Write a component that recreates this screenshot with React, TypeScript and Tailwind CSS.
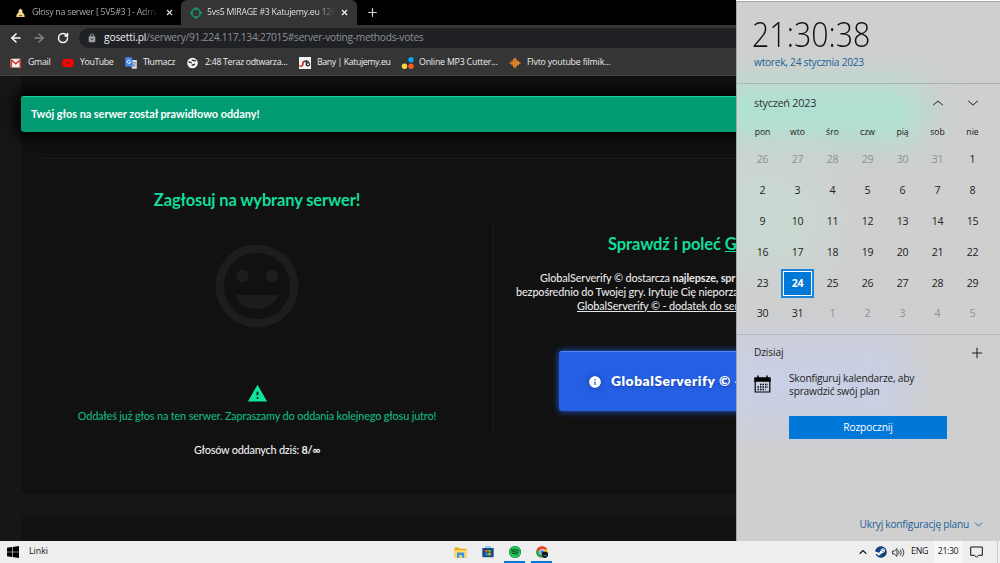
import type { ReactNode } from 'react'
import { ArrowLeft, ArrowRight, ChevronDown, ChevronUp, Plus, RotateCw, X } from 'lucide-react'
import { FaSpotify, FaSteam, FaYoutube } from 'react-icons/fa'
import { MdInfo, MdLock, MdWarning } from 'react-icons/md'

const weekDays = ['pon', 'wto', 'śro', 'czw', 'pią', 'sob', 'nie']

const days = [
  26, 27, 28, 29, 30, 31, 1, 2, 3, 4, 5, 6, 7, 8, 9, 10, 11, 12, 13, 14, 15, 16, 17, 18, 19, 20, 21,
  22, 23, 24, 25, 26, 27, 28, 29, 30, 31, 1, 2, 3, 4, 5,
]

function GmailIcon() {
  return (
    <svg viewBox="0 0 12 12" className="size-3">
      <rect x="0.500" y="1.800" width="10.500" height="8.700" rx="0.800" fill="#f2f2f2" />
      <path d="M1.300 10.500V3L5.750 6.800 10.200 3v7.500" fill="none" stroke="#d93a2f" strokeWidth="1.600" />
    </svg>
  )
}

function TranslateIcon() {
  return (
    <svg viewBox="0 0 12 12" className="size-3">
      <path d="M4.500 3h7.300v8.800H7z" fill="#d4d7dc" />
      <path d="M0.300 0.300h6.400L8.800 9.500H0.300z" fill="#4a86ee" />
      <path d="M5.300 3.700a1.700 1.700 0 1 0 .3 1.400H4" fill="none" stroke="#fff" strokeWidth="0.800" />
      <path d="M8 5.800h3M9.500 5v.8M8.700 9.500l2-3.500M8.800 7.300l1.800 2" stroke="#777" strokeWidth="0.600" />
    </svg>
  )
}

function GlobeIcon() {
  return (
    <svg viewBox="0 0 12 12" className="size-3">
      <circle cx="5.500" cy="6" r="5.300" fill="#f1f1f1" />
      <path d="M1.500 5c1.500 0 2 .8 3.300.8M4.800 3.200c1.200.6 2.700-.2 4.200.8M5 8.800c.5-1.300 2-.8 2.700-2" fill="none" stroke="#333" strokeWidth="1.500" />
    </svg>
  )
}

function BanIcon() {
  return (
    <svg viewBox="0 0 12 12" className="size-3">
      <rect width="12" height="12" fill="#f4f4f4" />
      <path d="M0.500 9h2.300c1.800 0 .2-4.600 2.800-4.600" fill="none" stroke="#d02626" strokeWidth="1.700" />
      <path d="M5 4.300h5M7.300 3v5.500" stroke="#222" strokeWidth="1.100" />
      <circle cx="9" cy="7.300" r="1.600" fill="none" stroke="#222" strokeWidth="1.200" />
    </svg>
  )
}

function CutterIcon() {
  return (
    <svg viewBox="0 0 12 12" className="size-3 overflow-visible">
      <circle cx="3.500" cy="9.200" r="2.700" fill="#ffd93b" />
      <circle cx="10" cy="2.800" r="2.700" fill="#0aa5f5" />
      <circle cx="10" cy="9.200" r="2.700" fill="#fb5a26" />
    </svg>
  )
}

function WaveIcon() {
  return (
    <svg viewBox="0 0 12 12" className="size-3" stroke="#f08a24" strokeWidth="1.400" strokeLinecap="round">
      <path d="M1.300 5.700v.6M3 4.500v3M4.600 2.500v7M6.200 1.200v9.600M7.800 3.200v5.600M9.300 4.700v2.600M10.800 5.700v.6" />
    </svg>
  )
}

const bookmarks: { label: string; icon: ReactNode; width: string; text: string }[] = [
  { label: 'Gmail', icon: <GmailIcon />, width: 'w-[52px]', text: 'tracking-[-0.3px]' },
  { label: 'YouTube', icon: <FaYoutube className="size-3 text-[#ff0000]" />, width: 'w-[63px]', text: 'tracking-[-0.4px]' },
  { label: 'Tłumacz', icon: <TranslateIcon />, width: 'w-[62px]', text: 'tracking-[-0.25px]' },
  { label: '2:48 Teraz odtwarza...', icon: <GlobeIcon />, width: 'w-[112px]', text: 'tracking-[-0.33px]' },
  { label: 'Bany | Katujemy.eu', icon: <BanIcon />, width: 'w-[102px]', text: 'tracking-[-0.42px]' },
  { label: 'Online MP3 Cutter...', icon: <CutterIcon />, width: 'w-[108px]', text: 'tracking-[-0.2px]' },
  { label: 'Flvto youtube filmik...', icon: <WaveIcon />, width: 'w-[110px]', text: 'tracking-[-0.17px]' },
]

function TabStrip() {
  return (
    <div className="flex h-[25px] shrink-0 items-center bg-black text-[8.8px] whitespace-nowrap">
      <div className="flex w-[181px] items-center pl-[15px]">
        <svg viewBox="0 0 12 12" className="size-[11px] shrink-0">
          <path d="M6 1.500l2 2.300.2 2.700H3.800L4 3.800z" fill="#fbe3a1" />
          <path d="M1.500 11c0-4 2-5 4.500-5s4.500 1 4.500 5z" fill="#f5d58a" />
          <path d="M4.300 8.800h3.400v1.200H4.300z" fill="#6b512c" />
        </svg>
        <span className="ml-1.5 w-[129px] overflow-hidden bg-linear-to-r from-[#b4b6b9] from-85% to-black bg-clip-text tracking-[-0.24px] text-transparent">
          Głosy na serwer [ 5V5#3 ] - Admi
        </span>
        <X className="ml-[4px] size-[9px] text-[#dedede]" strokeWidth={3} />
      </div>
      <div className="flex h-full w-[176px] items-center rounded-t-md bg-[#353535] pl-[9px]">
        <svg viewBox="0 0 12 12" className="size-3 shrink-0" fill="none" stroke="#129a70" strokeWidth="1.400">
          <circle cx="6" cy="6" r="4.300" />
          <path d="M6 0v3M6 9v3M0 6h3M9 6h3" />
        </svg>
        <span className="ml-[5px] w-[129px] overflow-hidden bg-linear-to-r from-[#f1f1f1] from-85% to-[#353535] bg-clip-text tracking-[-0.29px] text-transparent">
          5vs5 MIRAGE #3 Katujemy.eu 128
        </span>
        <X className="ml-[4px] size-[9px] text-white" strokeWidth={3} />
      </div>
      <Plus className="ml-[9px] size-[13px] text-[#d5d5d5]" strokeWidth={2.2} />
    </div>
  )
}

function Toolbar() {
  return (
    <div className="flex h-[25px] shrink-0 items-center bg-[#353535] pl-[9px] text-white">
      <ArrowLeft className="size-[14px]" strokeWidth={2.6} />
      <ArrowRight className="ml-[9px] size-[14px] text-[#858585]" strokeWidth={2.4} />
      <RotateCw className="ml-[11px] size-[12px]" strokeWidth={3} />
      <div className="mt-px ml-[10px] flex h-5 flex-1 items-center rounded-l-full bg-[#202124] pl-2">
        <MdLock className="size-[10px] text-[#9c9fa3]" />
        <span className="ml-[7px] text-[10.2px] tracking-[-0.26px] whitespace-nowrap text-[#8e9195]">
          <span className="tracking-[-0.13px] text-[#f0f0f0]">gosetti.pl</span>
          /serwery/91.224.117.134:27015#server-voting-methods-votes
        </span>
      </div>
    </div>
  )
}

function Bookmarks() {
  return (
    <div className="flex h-[26px] shrink-0 items-center border-b border-[#444] bg-[#353535] pl-2.5 text-[8.8px] whitespace-nowrap text-[#ededed]">
      {bookmarks.map((item) => (
        <div key={item.label} className={`${item.width} flex shrink-0 items-center gap-1.5`}>
          <span className="shrink-0">{item.icon}</span>
          <span className={item.text}>{item.label}</span>
        </div>
      ))}
    </div>
  )
}

function VoteColumn() {
  return (
    <div className="flex w-[472px] shrink-0 flex-col items-center whitespace-nowrap">
      <h2 className="mt-[29px] text-[16.5px] leading-6 font-bold tracking-[-0.14px] text-[#12dd9b]">
        Zagłosuj na wybrany serwer!
      </h2>
      <svg viewBox="0 0 84 84" className="mt-[32px] size-[84px]" fill="#1d1d1d">
        <circle cx="42" cy="42" r="37.300" fill="none" stroke="#1d1d1d" strokeWidth="8.400" />
        <circle cx="27.500" cy="32" r="6.300" />
        <circle cx="56.800" cy="32" r="6.300" />
        <path d="M20.500 51h43C60 60 52 65 42 65s-18-5-21.500-14z" />
      </svg>
      <MdWarning className="mt-[55px] size-[21px] text-[#0fe3a0]" />
      <p className="mt-[4px] text-[10.9px] leading-4 font-medium tracking-[-0.17px] text-[#10b681]">
        Oddałeś już głos na ten serwer. Zapraszamy do oddania kolejnego głosu jutro!
      </p>
      <p className="mt-[18px] text-[10.9px] leading-4 font-medium tracking-[-0.24px] text-[#eee]">
        Głosów oddanych dziś: <b>8/∞</b>
      </p>
    </div>
  )
}

function PromoColumn() {
  return (
    <div className="mt-[65px] h-[209px] flex-1 border-l border-[#1b1b1b] whitespace-nowrap">
      <h2 className="mt-[8px] pl-[114px] text-[16.5px] leading-6 font-bold tracking-[-0.12px] text-[#12dd9b]">
        Sprawdź i poleć <span className="underline">G</span>
      </h2>
      <div className="mt-[15px] text-[10.9px] leading-[14px] font-medium tracking-[-0.15px] text-[#e6e6e6]">
        <p className="pl-[46px]">
          GlobalServerify © dostarcza <b>najlepsze, spr</b>
        </p>
        <p className="pl-[22px]">bezpośrednio do Twojej gry. Irytuje Cię nieporzą</p>
        <p className="pl-[83px] underline">GlobalServerify © - dodatek do ser</p>
      </div>
      <div className="mt-[38px] ml-[65px] flex h-[60px] items-center rounded-[3px] border-t border-[#5885f0] bg-[#245fe4] pl-[29px] text-white shadow-[0_0_7px_#245fe4]">
        <MdInfo className="size-[14px] shrink-0 drop-shadow-[0_0_3px_#1238a0]" />
        <span className="ml-[9px] text-[13.8px] font-extrabold tracking-[0.53px] text-shadow-md">
          GlobalServerify © -
        </span>
      </div>
    </div>
  )
}

function ServerPage() {
  return (
    <main className="relative flex-1 overflow-hidden bg-[#161616] pl-[21px] font-[Lato,sans-serif]">
      <section className="h-[418px] rounded-bl-md bg-[#111] pt-[82px]">
        <hr className="ml-5 border-[#1b1b1b]" />
        <div className="flex">
          <VoteColumn />
          <PromoColumn />
        </div>
      </section>
      <section className="mt-[21px] h-10 rounded-tl-md bg-[#111]" />
      <div className="absolute -right-1 left-0 top-5 ml-[21px] flex h-9 items-center rounded-[3px] border-t border-[#12d49c] bg-[#039b72] pl-2.5 text-[10.9px] font-bold tracking-[-0.03px] text-white shadow-[0_0_14px_5px_#000]">
        Twój głos na serwer został prawidłowo oddany!
      </div>
    </main>
  )
}

function Calendar() {
  return (
    <div className="border-b border-[#b5b7ba] pt-[9px] pr-[10px] pb-[4px] pl-[8px]">
      <div className="-mt-px flex h-[22px] items-center pl-[9px] text-[#333]">
        <span className="w-[176px] text-[10.9px] tracking-[-0.27px]">styczeń 2023</span>
        <ChevronUp className="size-[16px] scale-x-115" strokeWidth={1.4} />
        <ChevronDown className="ml-[19px] size-[16px] scale-x-115" strokeWidth={1.4} />
      </div>
      <div className="mt-[9px] grid grid-cols-7 text-center text-[8.6px] leading-[18px] text-[#181818]">
        {weekDays.map((day) => (
          <span key={day}>{day}</span>
        ))}
      </div>
      <div className="mt-[4px] grid auto-rows-[30.8px] grid-cols-7 text-[10.6px] tracking-[-0.2px]">
        {days.map((day, i) => {
          if (i === 29) {
            return (
              <span key={i} className="flex items-center justify-center">
                <span className="flex h-[29px] w-[33px] items-center justify-center border-2 border-[#1b84dc] bg-[#0078d7] font-bold text-white outline -outline-offset-3 outline-white">
                  {day}
                </span>
              </span>
            )
          }
          const outside = i < 6 || i > 36
          return (
            <span
              key={i}
              className={`flex items-center justify-center ${outside ? 'text-[#8b9290]' : 'text-[#222]'}`}
            >
              {day}
            </span>
          )
        })}
      </div>
    </div>
  )
}

function Flyout() {
  return (
    <aside className="absolute top-px right-0 h-[540px] w-[264px] overflow-hidden border-t border-l border-[#a7a7a7] bg-[#cfcfcf]">
      <div className="absolute top-[84px] -left-8 h-[52px] w-[218px] bg-[#aae5d3] blur-[19px]" />
      <div className="absolute top-[160px] -left-10 h-[110px] w-[130px] bg-[#c9d8d1] blur-[24px]" />
      <div className="absolute top-[336px] -left-8 h-[90px] w-[205px] bg-[#c9cfe4] blur-[18px]" />
      <div className="relative flex h-full flex-col whitespace-nowrap">
        <header className="h-[82px] border-b border-[#acb5b2] pl-[15px]">
          <div className="mt-[12px] origin-left scale-x-[0.88] text-[34.5px] leading-10 font-light text-[#111]">
            21:30:38
          </div>
          <div className="pl-0.5 text-[10.2px] leading-4 tracking-[-0.26px] text-[#205f96]">
            wtorek, 24 stycznia 2023
          </div>
        </header>
        <Calendar />
        <div className="flex flex-1 flex-col pt-[9px] pl-[17px] text-[10.2px] text-[#222]">
          <div className="flex h-[18px] items-center justify-between pr-[15px]">
            <span className="tracking-[-0.15px]">Dzisiaj</span>
            <Plus className="size-[16px]" strokeWidth={1.6} />
          </div>
          <div className="mt-[10px] flex">
            <svg viewBox="0 0 17 18" className="mt-[3px] h-[18px] w-[17px] text-black">
              <path d="M1 3h15v3H1zM4 0.500v3M13 0.500v3" fill="currentColor" stroke="currentColor" strokeWidth="1.400" />
              <path d="M1.200 5v12h14.600V5" fill="none" stroke="currentColor" strokeWidth="1.200" />
              <path d="M6 9.500h8M3.500 12h10.500M3.500 14.500h8" stroke="currentColor" strokeWidth="1.500" strokeDasharray="1.500 1" />
            </svg>
            <p className="ml-[18px] leading-[13.300px] tracking-[-0.22px]">
              Skonfiguruj kalendarze, aby
              <br />
              sprawdzić swój plan
            </p>
          </div>
          <button className="mt-[18px] ml-[35px] h-[23px] w-[158px] bg-[#0078d7] tracking-[-0.1px] text-white">
            Rozpocznij
          </button>
          <div className="mt-auto mb-[9px] flex items-center justify-end pr-[15px] text-[#205f96]">
            <span className="tracking-[-0.25px]">Ukryj konfigurację planu</span>
            <ChevronDown className="ml-[3px] size-[13px]" strokeWidth={1.6} />
          </div>
        </div>
      </div>
    </aside>
  )
}

function Taskbar() {
  return (
    <footer className="flex h-[22px] items-center bg-[#eee] text-[8.8px] text-[#151515]">
      <svg viewBox="0 0 12 12" className="ml-[7px] size-3 text-black" fill="currentColor">
        <path d="M0 1.700l5-.7v4.700H0zM5.600.9L12 0v5.700H5.600zM0 6.300h5V11l-5-.7zM5.600 6.300H12V12l-6.400-.9z" />
      </svg>
      <span className="ml-[10px]">Linki</span>
      <div className="ml-[399px] flex h-full items-center">
        <div className="flex h-full w-[27px] items-center justify-center">
          <svg viewBox="0 0 13 11" className="h-[11px] w-[13px]">
            <path d="M.5.500h4.300l1 1.300h6.700v8.700H.5z" fill="#e7a514" />
            <path d="M.5 3h12v7.500H.5z" fill="#ffd865" />
            <path d="M3 10.800V5.600h7.200v5.200H8V8.200H5.300v2.600z" fill="#369ae6" />
          </svg>
        </div>
        <div className="flex h-full w-[27px] items-center justify-center">
          <svg viewBox="0 0 12 12" className="size-3">
            <path d="M3.800 3V.7h4.400V3" fill="none" stroke="#41b7ec" />
            <path d="M.3 2h11.400v8.300a1 1 0 0 1-1 1H1.300a1 1 0 0 1-1-1z" fill="#174b86" />
            <path d="M3.300 4h2.400v2.400H3.300z" fill="#f25022" />
            <path d="M6.300 4h2.400v2.400H6.300z" fill="#7fba00" />
            <path d="M3.300 7h2.400v2.400H3.300z" fill="#00a4ef" />
            <path d="M6.300 7h2.400v2.400H6.300z" fill="#ffb900" />
          </svg>
        </div>
        <div className="flex h-full w-[27px] flex-col items-center justify-between pt-[5px]">
          <span className="rounded-full bg-[#12381f]">
            <FaSpotify className="size-3 text-[#1bcb5a]" />
          </span>
          <span className="h-[2px] w-[21px] bg-[#0078d7]" />
        </div>
        <div className="flex h-full w-[27px] flex-col items-center justify-between pt-[5px]">
          <svg viewBox="0 0 12 12" className="size-3">
            <circle cx="6" cy="6" r="5.800" fill="#f7c52b" />
            <path d="M.9 3.200a5.800 5.800 0 0 1 10.300.2H6L3.700 7.300z" fill="#e04235" />
            <path d="M.9 3.200a5.800 5.800 0 0 0 4.600 8.600L7.300 8.500 3.700 7.300z" fill="#23a454" />
            <circle cx="6" cy="6" r="2.700" fill="#fff" />
            <circle cx="6" cy="6" r="2.100" fill="#3f83ee" />
            <circle cx="9" cy="8.700" r="3.200" fill="#151515" />
            <path d="M7.300 9.500h3.400" stroke="#1687ce" />
          </svg>
          <span className="h-[2px] w-[21px] bg-[#0078d7]" />
        </div>
      </div>
      <div className="ml-auto flex h-full items-center">
        <ChevronUp className="size-[12px]" strokeWidth={2.2} />
        <span className="ml-[6px] rounded-full bg-white">
          <FaSteam className="size-[12px] text-[#12427c]" />
        </span>
        <svg viewBox="0 0 13 11" className="ml-[5px] h-[11px] w-[13px]" fill="none" stroke="#222" strokeWidth="0.900">
          <path d="M.6 4h1.800L5 1.600v7.800L2.400 7H.6zM6.500 3.800q1.200 1.700 0 3.400M8.300 2.600q2.200 2.900 0 5.800M10.200 1.400q3.200 4.100 0 8.200" />
        </svg>
        <span className="ml-[6px] w-[23px] tracking-[-0.2px]">ENG</span>
        <span className="flex h-full w-[28px] items-center justify-center bg-[#f6f6f6] tracking-[-0.4px]">21:30</span>
        <svg viewBox="0 0 13 12" className="ml-[8px] h-3 w-[13px]" fill="none" stroke="#111">
          <path d="M.7 1h11.600v8.300H8.500L6.500 11.300l-2-2H.7z" />
        </svg>
        <span className="ml-[14px] h-full w-[3px] border-l border-[#ccc]" />
      </div>
    </footer>
  )
}

export default function App() {
  return (
    <div className="relative h-[563px] w-[1000px] overflow-hidden font-['Open_Sans','Noto_Sans',sans-serif]">
      <div className="flex h-[541px] w-[736px] flex-col overflow-hidden">
        <TabStrip />
        <Toolbar />
        <Bookmarks />
        <ServerPage />
      </div>
      <Flyout />
      <Taskbar />
    </div>
  )
}
